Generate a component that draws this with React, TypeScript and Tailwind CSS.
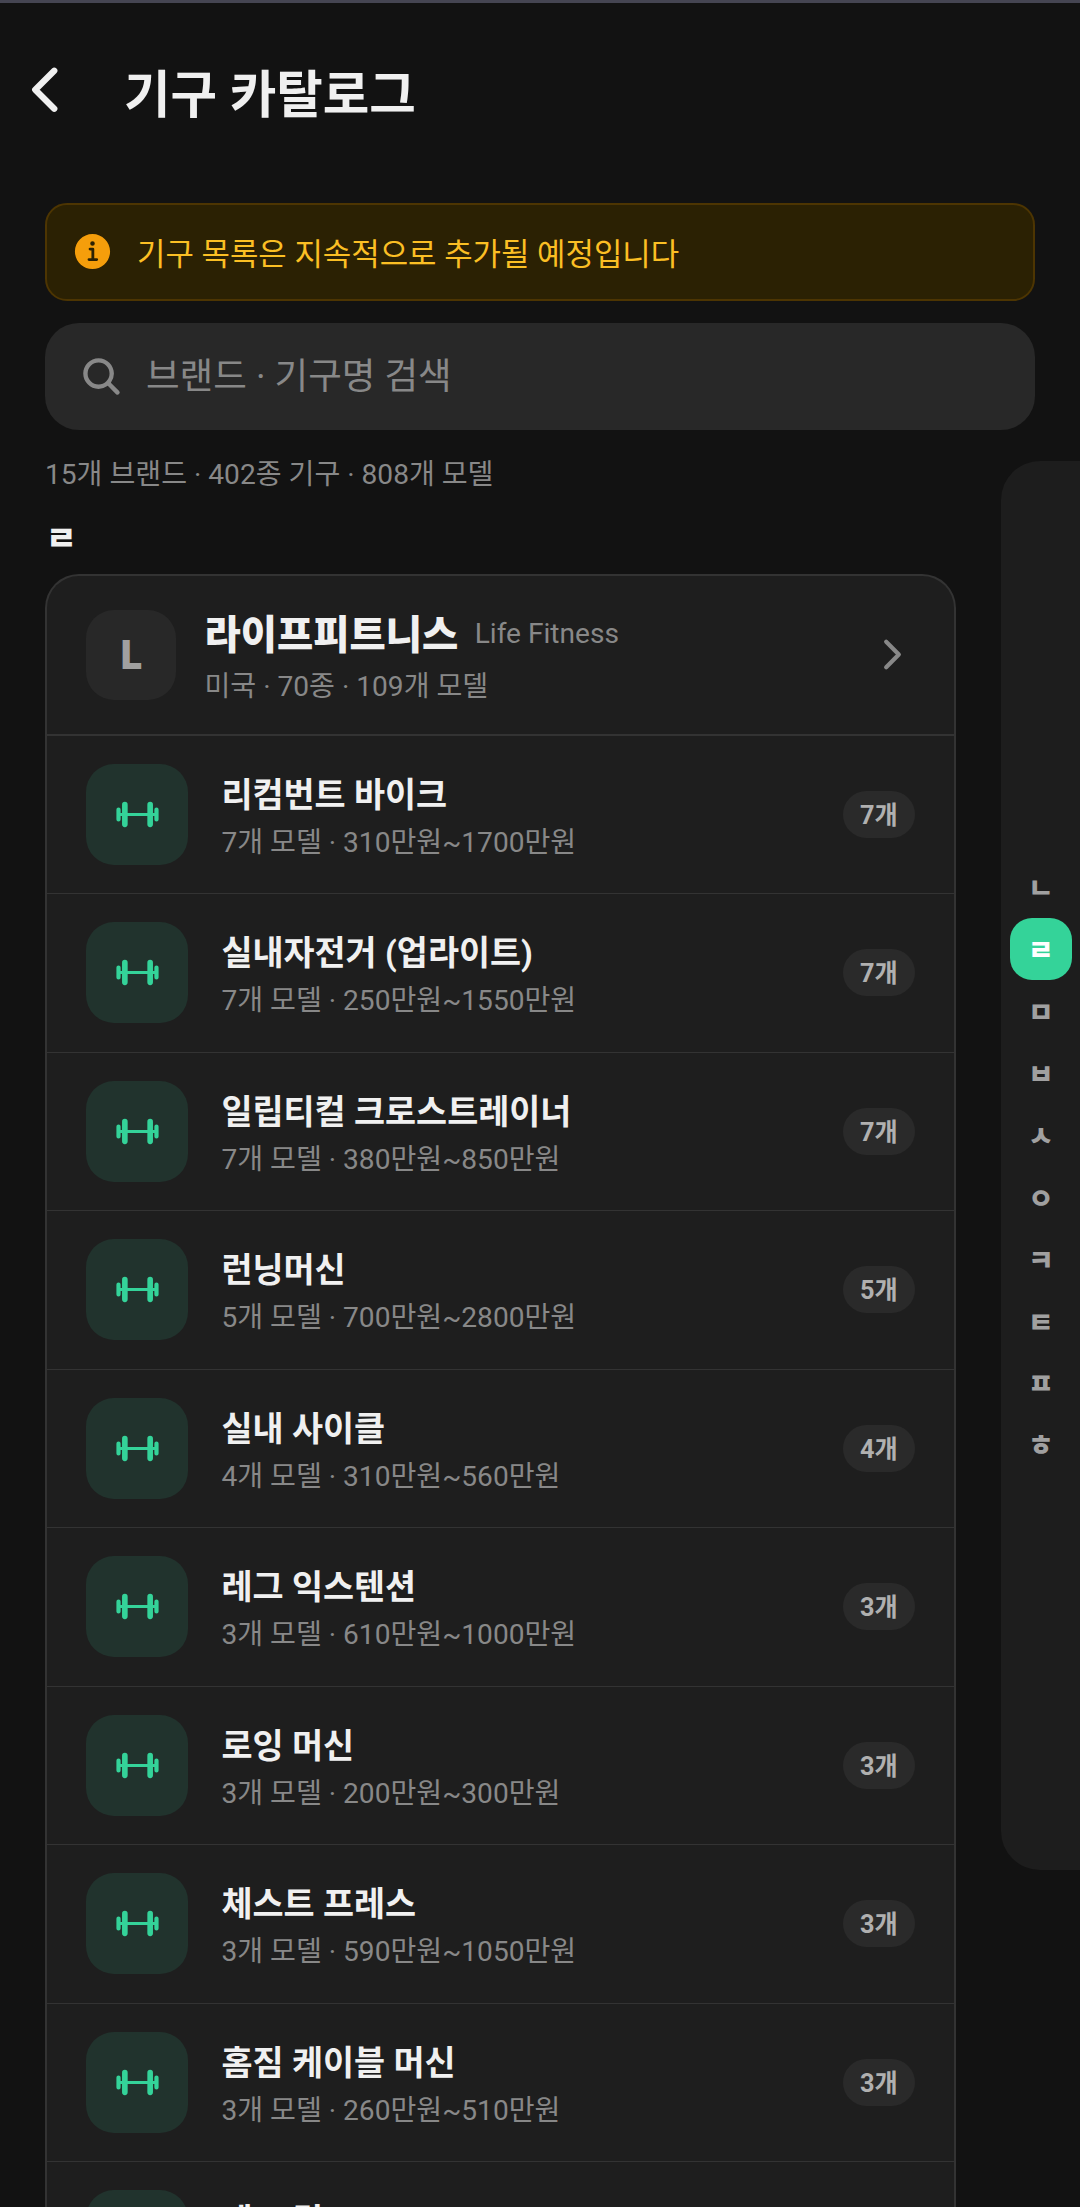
import { IoBarbellOutline, IoChevronBack, IoChevronForward, IoInformationCircle, IoSearch } from 'react-icons/io5'

const machines = [
  { name: '리컴번트 바이크', count: 7, price: '310만원~1700만원' },
  { name: '실내자전거 (업라이트)', count: 7, price: '250만원~1550만원' },
  { name: '일립티컬 크로스트레이너', count: 7, price: '380만원~850만원' },
  { name: '런닝머신', count: 5, price: '700만원~2800만원' },
  { name: '실내 사이클', count: 4, price: '310만원~560만원' },
  { name: '레그 익스텐션', count: 3, price: '610만원~1000만원' },
  { name: '로잉 머신', count: 3, price: '200만원~300만원' },
  { name: '체스트 프레스', count: 3, price: '590만원~1050만원' },
  { name: '홈짐 케이블 머신', count: 3, price: '260만원~510만원' },
  { name: '레그 컬', count: 2, price: '590만원~980만원' },
]

const letters = ['ㄴ', 'ㄹ', 'ㅁ', 'ㅂ', 'ㅅ', 'ㅇ', 'ㅋ', 'ㅌ', 'ㅍ', 'ㅎ']

function MachineRow({ name, count, price }: { name: string; count: number; price: string }) {
  return (
    <li className="flex h-[158.5px] shrink-0 items-center border-b border-[#333] pl-[39px] pr-[39px]">
      <div className="flex h-[101px] w-[102px] shrink-0 items-center justify-center rounded-[28px] bg-[#21332d] text-[#34d399]">
        <IoBarbellOutline size={45} />
      </div>
      <div className="ml-[33.4px] flex-1 pt-[9px]">
        <p className="text-[33.75px] font-bold leading-[48px] text-[#f0f0f0]">{name}</p>
        <p className="text-[28.125px] leading-[46px] text-[#888]">{count}개 모델 · {price}</p>
      </div>
      <span className="flex h-[47px] w-[72px] items-center justify-center rounded-full bg-[#2a2a2a] pt-[3px] text-[25.3px] font-bold text-[#b0b0b0]">
        {count}개
      </span>
    </li>
  )
}

export default function App() {
  return (
    <div className="flex h-[2207px] w-[1080px] flex-col overflow-hidden border-t-[3px] border-[#454552] bg-[#121212] font-[Roboto,'Noto_Sans_CJK_KR',sans-serif] text-[#f0f0f0]">
      <header className="flex h-[180px] shrink-0 items-center pl-[11px]">
        <IoChevronBack size={67.5} className="mb-[7px] shrink-0" />
        <h1 className="ml-[45.5px] pt-[5px] text-[50.6px] font-bold leading-[60px]">기구 카탈로그</h1>
      </header>

      <div className="mx-[45px] mt-5 flex h-[98px] shrink-0 items-center rounded-[22px] border-2 border-[#4d3502] bg-[#2b2103] pl-[22.5px]">
        <IoInformationCircle size={45} className="mb-[2px] text-[#f59e0b]" />
        <p className="ml-[22.5px] pt-[6px] text-[30.9px] text-[#fbbf24]">기구 목록은 지속적으로 추가될 예정입니다</p>
      </div>

      <div className="mx-[45px] mt-[22px] flex h-[107px] shrink-0 items-center rounded-[34px] bg-[#282828] pl-[34px] text-[#888]">
        <IoSearch size={45} />
        <p className="ml-[22px] pt-[2px] text-[36.56px]">브랜드 · 기구명 검색</p>
      </div>

      <div className="flex min-h-0 flex-1 justify-between">
        <main className="ml-[45px] flex w-[911px] flex-col">
          <p className="mt-[24px] h-[42px] text-[28.125px] leading-[42px] text-[#888]">15개 브랜드 · 402종 기구 · 808개 모델</p>
          <h2 className="mt-[20px] h-[58px] pl-px text-[33.75px] font-black leading-[48px]">ㄹ</h2>

          <section className="flex min-h-0 flex-1 flex-col overflow-hidden rounded-t-[34px] border-2 border-b-0 border-[#333] bg-[#1e1e1e]">
            <div className="flex h-[159.5px] shrink-0 items-center border-b-2 border-[#333] pl-[39px] pr-[39px]">
              <div className="flex size-[90px] shrink-0 items-center justify-center rounded-[28px] bg-[#282828] pb-[6px] font-['Noto_Sans_CJK_KR',sans-serif] text-[39.4px] font-black leading-none text-[#a0a0a0]">L</div>
              <div className="ml-[28.5px] flex-1 pt-[9px]">
                <p className="flex items-center leading-[56px]">
                  <span className="text-[39.4px] font-extrabold">라이프피트니스</span>
                  <span className="-mt-1 ml-[16.5px] text-[28.125px] text-[#888]">Life Fitness</span>
                </p>
                <p className="text-[28.125px] leading-[46px] text-[#888]">미국 · 70종 · 109개 모델</p>
              </div>
              <IoChevronForward size={45} className="text-[#888]" />
            </div>
            <ul className="flex flex-col">
              {machines.map(machine => (
                <MachineRow key={machine.name} {...machine} />
              ))}
            </ul>
          </section>
        </main>

        <nav className="mt-[31px] flex h-[1409px] w-[79px] flex-col items-center justify-center rounded-l-[39px] bg-[#1d1d1d] pl-px">
          {letters.map(letter => (
            <a
              key={letter}
              className={`flex size-[61.875px] items-center justify-center rounded-[22px] pt-[7px] text-[28.125px] font-black ${letter === 'ㄹ' ? 'bg-[#34d399] text-white' : 'text-[#a0a0a0]'}`}
            >
              {letter}
            </a>
          ))}
        </nav>
      </div>
    </div>
  )
}
